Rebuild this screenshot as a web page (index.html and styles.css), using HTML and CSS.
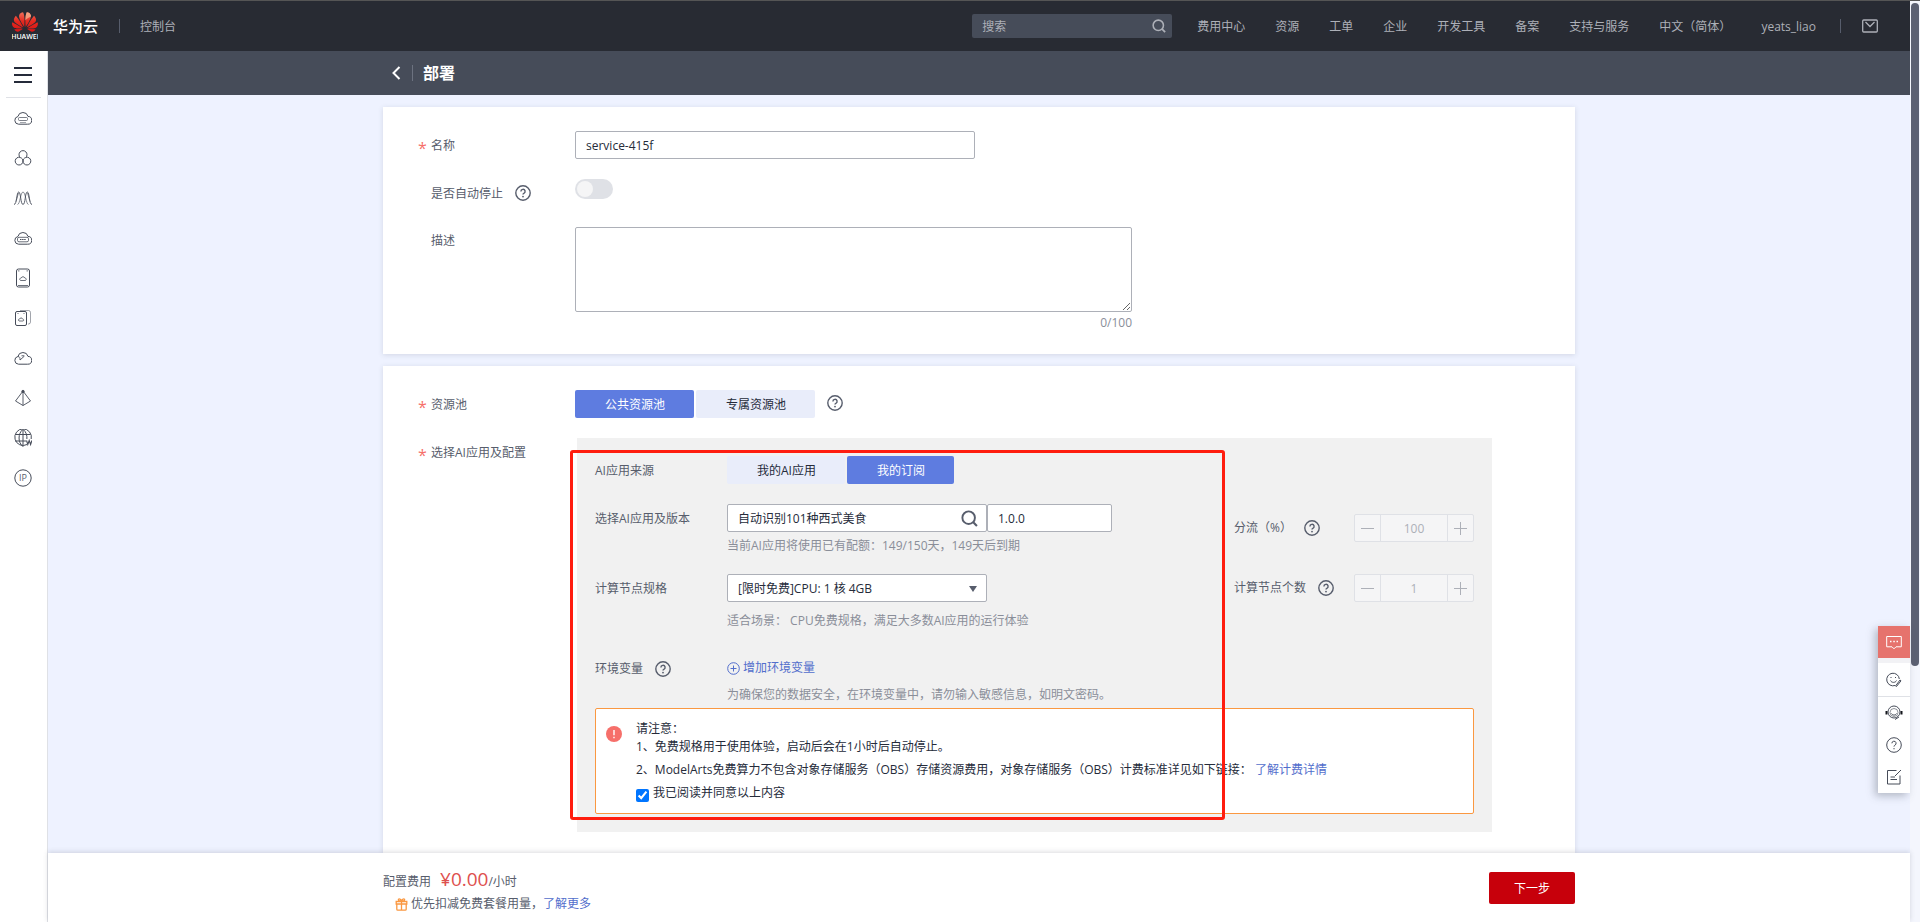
FILE: index.html
```html
<!DOCTYPE html>
<html lang="zh-CN">
<head>
<meta charset="utf-8">
<title>部署 - 华为云</title>
<link rel="stylesheet" href="styles.css">
</head>
<body>
<svg class="sprite" aria-hidden="true">
  <symbol id="help" viewBox="0 0 16 16"><circle cx="8" cy="8" r="7.2" fill="none" stroke="currentColor" stroke-width="1.4"/><path d="M5.9 6.4a2.1 2.1 0 1 1 3 1.9c-.6.3-.9.6-.9 1.3" fill="none" stroke="currentColor" stroke-width="1.4"/><circle cx="8" cy="11.6" r=".9" fill="currentColor"/></symbol>
  <symbol id="search" viewBox="0 0 16 16"><circle cx="7.2" cy="7.2" r="5.9" fill="none" stroke="currentColor" stroke-width="1.8"/><path d="M11.3 11.3 15 15" stroke="currentColor" stroke-width="2"/></symbol>
  <symbol id="cloud" viewBox="0 0 18 14"><path d="M4.500 13.200a3.900 3.900 0 0 1-.6-7.700A5.200 5.200 0 0 1 14 5.400 3.900 3.900 0 0 1 13.600 13.200Z" fill="none" stroke="currentColor"/></symbol>
</svg>
<div class="app">
  <div class="window">
    <header class="topbar">
      <a class="brand" href="#">
        <svg class="logo" width="26" height="28" viewBox="0 0 26 28" aria-hidden="true">
          <defs><linearGradient id="petal" x1="0" y1="0" x2="0" y2="1"><stop offset="0" stop-color="#f0705a"/><stop offset=".45" stop-color="#e62a20"/><stop offset="1" stop-color="#d81515"/></linearGradient></defs>
          <g transform="translate(0 -3) scale(1.08)"><path fill="url(#petal)" d="M3.67 6.14S1.82 7.91 1.72 9.78v.35c.08 1.51 1.22 2.4 1.22 2.4 1.83 1.79 6.26 4.04 7.3 4.55 0 0 .06.03.1-.01l.02-.04v-.04C7.52 10.8 3.67 6.14 3.67 6.14zM9.65 18.6c-.02-.08-.1-.08-.1-.08l-7.38.26c.8 1.43 2.15 2.53 3.56 2.2.96-.25 3.16-1.78 3.88-2.3.06-.05.04-.09.04-.09zm.08-.78C6.49 15.63.21 12.28.21 12.28c-.15.46-.2.9-.21 1.3v.07c0 1.07.4 1.82.4 1.82.8 1.69 2.34 2.2 2.34 2.2.7.3 1.4.31 1.4.31.12.02 4.4 0 5.54 0 .05 0 .08-.05.08-.05v-.06c0-.03-.03-.05-.03-.05zM9.06 3.19a3.42 3.42 0 00-2.57 3.15v.41c.03.6.16 1.05.16 1.05.66 2.9 3.86 7.65 4.55 8.65.05.05.1.03.1.03a.1.1 0 00.06-.1c1.06-10.6-1.11-13.42-1.11-13.42-.32.02-1.19.23-1.19.23z"/><path fill="url(#petal)" d="M17.359 5.46s-.49-1.8-2.44-2.28c0 0-.57-.14-1.17-.22 0 0-2.18 2.81-1.12 13.43.01.07.06.08.06.08.07.03.1-.03.1-.03.72-1.03 3.9-5.76 4.55-8.64 0 0 .36-1.4.02-2.34zm-2.92 13.07s-.07 0-.09.05c0 0-.01.07.03.1.7.51 2.85 2 3.88 2.3 0 0 .16.05.43.06h.14c.69-.02 1.9-.37 3-2.26l-7.4-.25zm7.83-8.41c.14-2.06-1.94-3.97-1.94-3.98 0 0-3.85 4.66-6.67 10.8 0 0-.03.08.02.13l.04.01h.06c1.06-.53 5.46-2.77 7.28-4.54 0 0 1.15-.93 1.21-2.42zm1.52 2.14s-6.28 3.37-9.52 5.55c0 0-.05.04-.03.11 0 0 .03.06.07.06 1.16 0 5.56 0 5.67-.02 0 0 .57-.02 1.27-.29 0 0 1.56-.5 2.37-2.27 0 0 .73-1.45.17-3.14z"/><path d="M17.359 5.46s-.49-1.8-2.44-2.28c0 0-.57-.14-1.17-.22 0 0-1.3 1.800-1.350 7.500 1.500-1.500 3.500-2.500 5.200-3.400 0 0 .2-.9-.24-1.600z" fill="#f6b48e" opacity=".75"/></g>
          <text x="13" y="27" text-anchor="middle" class="logo-text">HUAWEI</text>
        </svg>
        <span class="brand-name">华为云</span>
      </a>
      <span class="bar-divider"></span>
      <a class="console" href="#">控制台</a>
      <label class="top-search">
        <input type="text" placeholder="搜索" aria-label="搜索">
        <svg width="14" height="14"><use href="#search"/></svg>
      </label>
      <nav class="top-nav">
        <a href="#">费用中心</a><a href="#">资源</a><a href="#">工单</a><a href="#">企业</a><a href="#">开发工具</a><a href="#">备案</a><a href="#">支持与服务</a><a href="#">中文（简体）</a><a href="#">yeats_liao</a>
      </nav>
      <span class="bar-divider user-divider"></span>
      <button class="mail" aria-label="消息"><svg width="16" height="14" viewBox="0 0 16 14" fill="none" stroke="currentColor" stroke-width="1.3"><rect x=".7" y="1" width="14.600" height="12" rx="1"/><path d="M3.500 3 8 7.500 12.500 3"/></svg></button>
    </header>
    <div class="body">
      <aside class="sidebar">
        <button class="menu" aria-label="菜单"><span></span><span></span><span></span></button>
        <nav class="side-nav">
          <a href="#" aria-label="弹性云服务器"><svg width="18" height="14" viewBox="0 0 18 14" fill="none" stroke="currentColor"><use href="#cloud" width="18" height="14"/><rect x="4.500" y="6.500" width="9" height="3" rx="1" opacity=".7"/><path d="M6 11.500h6" opacity=".5"/></svg></a>
          <a href="#" aria-label="容器"><svg width="18" height="18" viewBox="0 0 18 18" fill="none" stroke="currentColor"><path d="M6.300 8.600a4 4 0 1 1 5.400 0M9 12a3.900 3.900 0 1 1-3-3.700M9 12a3.900 3.900 0 1 0 3-3.700M9 12c0-1.500-1-3-2.700-3.400M9 12c0-1.500 1-3 2.700-3.400"/></svg></a>
          <a href="#" aria-label="弹性伸缩"><svg width="18" height="18" viewBox="0 0 18 18" fill="none" stroke="currentColor" stroke-width=".9"><path d="M0 15.500C3 15.500 2.500 3 4.700 3S6.500 15.500 9 15.500 11 3 13.300 3 15 15.500 18 15.500"/><path d="M3.500 15.500C6 15.500 6.500 3 9 3s3 12.500 5.500 12.500M2 12.500 4.500 4M16 12.500 13.500 4" opacity=".7"/></svg></a>
          <a href="#" aria-label="云硬盘"><svg width="18" height="14" viewBox="0 0 18 14" fill="none" stroke="currentColor"><use href="#cloud" width="18" height="14"/><rect x="3.500" y="6.300" width="11" height="4.500" rx="1.500" opacity=".8"/><path d="M6 8.500h6" stroke-dasharray="1.500 .6"/></svg></a>
          <a href="#" aria-label="专属主机"><svg width="18" height="20" viewBox="0 0 18 20" fill="none" stroke="currentColor"><rect x="2.500" y="1" width="13" height="18" rx="2"/><path d="M4 17.500h10M4 2.900h1.500M12.500 2.900H14M6.500 12.500c-1.500-1-.5-2.700.7-2.500.6-1.700 3-1.700 3.600 0 1.400-.1 2 1.700.7 2.500Z" stroke-width=".8"/></svg></a>
          <a href="#" aria-label="镜像"><svg width="18" height="18" viewBox="0 0 18 18" fill="none" stroke="currentColor"><rect x="1.500" y="2.500" width="11" height="14" rx="1.500"/><path d="M6 1.500h8.500a2 2 0 0 1 2 2V13a2 2 0 0 1-2 2H14" opacity=".5"/><path d="M5 12c-1.200-.8-.4-2.200.6-2 .5-1.400 2.500-1.400 3 0 1 0 1.500 1.300.6 2ZM3.500 4.500h1M9.500 4.500h1" stroke-width=".8"/></svg></a>
          <a href="#" aria-label="云速建站"><svg width="18" height="14" viewBox="0 0 18 14" fill="none" stroke="currentColor"><use href="#cloud" width="18" height="14"/><path d="M4 5.500c2 .2 2 1.500 2 3.500l4.500-4M10 4.800H7.500" stroke-width=".9"/></svg></a>
          <a href="#" aria-label="安全"><svg width="18" height="18" viewBox="0 0 18 18" fill="none" stroke="currentColor" stroke-width=".9"><path d="M9 2 1.500 12 9 16.500 16.500 12ZM9 2v14.500"/><circle cx="9" cy="2.500" r="1.200" fill="currentColor"/></svg></a>
          <a href="#" aria-label="域名"><svg width="18" height="18" viewBox="1 1 18 18" fill="none" stroke="currentColor"><path d="M14 16.500A8.300 8.300 0 1 1 18.200 11M9.800 1.500c-5 4-5 13 0 17M10.200 1.500c3 2.400 4 6 3.700 9.500M2.500 6.500h15M2 13h11M10 1.500v17"/><path d="m13.500 12.500 1.300 4 1.400-4 1.400 4 1.300-4" stroke-width="1.100"/></svg></a>
          <a href="#" aria-label="弹性公网IP"><svg width="18" height="18" viewBox="0 0 18 18" fill="none" stroke="currentColor"><circle cx="9" cy="9" r="8.200"/><text x="9" y="12" text-anchor="middle" class="ip-text">IP</text></svg></a>
        </nav>
      </aside>
      <div class="page">
        <div class="subheader">
          <div class="subheader-inner">
            <button class="back" aria-label="返回"><svg width="10" height="14" viewBox="0 0 10 14" fill="none" stroke="currentColor" stroke-width="2"><path d="M8.500 1 2.500 7l6 6"/></svg></button>
            <h1>部署</h1>
          </div>
        </div>
        <main class="content">
          <section class="card">
            <div class="row">
              <label class="label required" for="name">名称</label>
              <input class="field name-field" id="name" type="text" value="service-415f">
            </div>
            <div class="row">
              <div class="label"><label for="autostop">是否自动停止</label><svg class="help" width="16" height="16"><use href="#help"/></svg></div>
              <input class="switch" id="autostop" type="checkbox" role="switch">
            </div>
            <div class="row">
              <label class="label" for="desc">描述</label>
              <div class="desc"><textarea id="desc"></textarea><span class="count">0/100</span></div>
            </div>
          </section>
          <section class="card pool-card">
            <div class="row">
              <span class="label required">资源池</span>
              <div class="segment"><button class="active">公共资源池</button><button>专属资源池</button></div>
              <svg class="help pool-help" width="16" height="16"><use href="#help"/></svg>
            </div>
            <div class="row">
              <span class="label required">选择AI应用及配置</span>
              <div class="panel">
                <div class="panel-grid">
                  <div class="panel-left">
                    <div class="prow source"><span class="plabel">AI应用来源</span><div class="segment"><button>我的AI应用</button><button class="active">我的订阅</button></div></div>
                    <div class="prow version">
                      <label class="plabel" for="app">选择AI应用及版本</label>
                      <div>
                        <div class="version-fields">
                          <div class="search-field"><input class="field" id="app" type="text" value="自动识别101种西式美食"><svg width="17" height="17"><use href="#search"/></svg></div>
                          <input class="field ver" type="text" value="1.0.0" aria-label="版本">
                        </div>
                        <p class="hint">当前AI应用将使用已有配额：149/150天，149天后到期</p>
                      </div>
                    </div>
                    <div class="prow spec">
                      <label class="plabel" for="spec">计算节点规格</label>
                      <div>
                        <div class="select"><select class="field" id="spec"><option>[限时免费]CPU: 1 核 4GB</option></select></div>
                        <p class="hint spec-hint">适合场景： CPU免费规格，满足大多数AI应用的运行体验</p>
                      </div>
                    </div>
                    <div class="prow">
                      <span class="plabel">环境变量<svg class="help" width="16" height="16"><use href="#help"/></svg></span>
                      <div>
                        <a class="link add" href="#"><svg width="13" height="13" viewBox="0 0 13 13" fill="none" stroke="currentColor"><circle cx="6.500" cy="6.500" r="5.800"/><path d="M3.500 6.500h6M6.500 3.500v6"/></svg>增加环境变量</a>
                        <p class="hint env-hint">为确保您的数据安全，在环境变量中，请勿输入敏感信息，如明文密码。</p>
                      </div>
                    </div>
                  </div>
                  <div class="panel-right">
                    <div class="steprow"><label for="flow">分流（%）</label><svg class="help" width="16" height="16"><use href="#help"/></svg><div class="stepper"><button disabled aria-label="减少"><i></i></button><input id="flow" type="text" value="100" disabled><button class="plus" disabled aria-label="增加"><i></i></button></div></div>
                    <div class="steprow"><label for="nodes">计算节点个数</label><svg class="help" width="16" height="16"><use href="#help"/></svg><div class="stepper"><button disabled aria-label="减少"><i></i></button><input id="nodes" type="text" value="1" disabled><button class="plus" disabled aria-label="增加"><i></i></button></div></div>
                  </div>
                </div>
                <div class="notice">
                  <svg class="notice-icon" width="16" height="16" viewBox="0 0 16 16"><circle cx="8" cy="8" r="8" fill="#f66f6a"/><path d="M8 4v5.200M8 10.700v1.500" stroke="#fff" stroke-width="1.400"/></svg>
                  <div class="notice-body">
                    <p class="notice-title">请注意：</p>
                    <p class="notice-first">1、免费规格用于使用体验，启动后会在1小时后自动停止。</p>
                    <p class="notice-line">2、ModelArts免费算力不包含对象存储服务（OBS）存储资源费用，对象存储服务（OBS）计费标准详见如下链接： <a class="link" href="#">了解计费详情</a></p>
                    <label class="agree"><input type="checkbox" checked><span>我已阅读并同意以上内容</span></label>
                  </div>
                </div>
                <div class="highlight"></div>
              </div>
            </div>
          </section>
        </main>
        <footer class="footer">
          <div class="footer-inner">
            <div class="cost">
              <p class="cost-line"><span>配置费用</span><strong>¥0.00</strong><span>/小时</span></p>
              <p class="gift"><svg width="13" height="13" viewBox="0 0 13 13" fill="none" stroke="#fa9841" stroke-width="1.300"><path d="M1.200 3.500h10.600v2.500H1.200ZM1.800 6v5.200a1 1 0 0 0 1 1h7.400a1 1 0 0 0 1-1V6M6.500 3.500v8.700M6.500 3.300C5 3.300 3 2.500 3.500 1.200c1-1 2.800.6 3 2.100.2-1.500 2-3.100 3-2.100.5 1.300-1.500 2.100-3 2.100"/></svg>优先扣减免费套餐用量，<a class="link" href="#">了解更多</a></p>
            </div>
            <button class="next">下一步</button>
          </div>
        </footer>
      </div>
    </div>
    <div class="float">
      <button class="float-chat" aria-label="反馈"><svg width="16" height="15" viewBox="0 0 16 15" fill="none" stroke="currentColor"><path d="M.7 1.500h14.600v10.300H10l-2 2-2-2H.7Z"/><path d="M4 6.500h1.500M7.300 6.500h1.500M10.500 6.500H12" stroke-width="1.500"/></svg></button>
      <div class="float-list">
        <button class="float-face" aria-label="评价"><svg width="16" height="16" viewBox="0 0 16 16" fill="none" stroke="currentColor"><path d="M9 13.500A6.300 6.300 0 1 1 13.300 7M4.500 8.500c1 2.500 5 2.500 6 0M9.500 14l4.500-6 1 .8-4.500 5.700ZM5 5v1M9.500 5v1"/></svg></button>
        <button aria-label="客服"><svg width="18" height="16" viewBox="0 0 18 16" fill="none" stroke="currentColor"><circle cx="9" cy="7" r="6"/><circle cx="9" cy="7.500" r="4" opacity=".6"/><path d="M6.500 8.500c1 2 4 2 5 0M14 12l-4 2.500"/><path d="M1.500 6v3.500M16.500 6v3.500" stroke="#14161c" stroke-width="2"/></svg></button>
        <button aria-label="帮助"><svg width="16" height="16" viewBox="0 0 16 16" fill="none" stroke="currentColor"><circle cx="8" cy="8" r="7.300"/><path d="M5.900 6.300a2.100 2.100 0 1 1 3 1.900c-.6.300-.9.700-.9 1.400M8 11v1.300"/></svg></button>
        <button aria-label="建议"><svg width="16" height="16" viewBox="0 0 16 16" fill="none" stroke="currentColor"><path d="M10.500 1.500H1.500v13.500h12.500V6.500M15 1 9 7M4.500 8h4.500M4.500 10.500H11"/></svg></button>
      </div>
    </div>
  </div>
  <div class="scrollbar"><div class="thumb"></div></div>
</div>
</body>
</html>
```
FILE: styles.css
```css
* { box-sizing: border-box; }
body, p, h1 { margin: 0; }
body, button, input, select, textarea {
  font-family: "Open Sans", "Noto Sans CJK SC", sans-serif;
  font-size: 12px;
}
body { color: #575d6c; line-height: 18px; }
a { color: inherit; text-decoration: none; }
button { border: 0; padding: 0; background: none; color: inherit; }
svg { flex: none; display: block; }
.sprite { position: absolute; width: 0; height: 0; }

.app { display: flex; height: 100vh; overflow: hidden; border-top: 1px solid #555; }
.window { position: relative; flex: 1; min-width: 0; display: flex; flex-direction: column; }
.scrollbar { width: 10px; padding: 2px 1px; background: #f4f6fd; }
.thumb { height: 663px; border-radius: 4px; background: #5c6173; }

.topbar { display: flex; align-items: center; flex: none; height: 50px; padding: 0 32px 0 12px; background: #282b33; color: #adb0b8; }
.brand { display: flex; align-items: center; gap: 15px; }
.logo-text { font: 600 7px "Open Sans", sans-serif; fill: #fff; }
.brand-name { color: #fff; font-size: 15px; font-weight: 500; }
.bar-divider { width: 1px; height: 14px; margin: 0 20px 0 21px; background: #575d6c; }
.console, .top-nav { line-height: 20px; padding-top: 2px; }
.top-search { display: flex; align-items: center; width: 200px; height: 24px; margin: 0 25px 0 auto; padding: 0 6px 0 10px; border-radius: 2px; background: #464c59; }
.top-search input { flex: 1; min-width: 0; border: 0; padding: 0; background: none; color: #adb0b8; }
.top-search input::placeholder { color: #adb0b8; }
.top-nav { display: flex; gap: 30px; white-space: nowrap; }
.user-divider { margin: 0 21px 0 24px; }

.body { display: flex; flex: 1; min-height: 0; }
.sidebar { flex: none; width: 48px; background: #fff; border-right: 1px solid #dfe1e6; color: #464c59; }
.menu { display: flex; flex-direction: column; gap: 5px; width: 35px; height: 47px; margin: 0 6px; padding: 16px 9px 0 8px; border-bottom: 1px solid #dfe1e6; }
.menu span { width: 18px; height: 2px; background: #252b3a; }
.side-nav a { display: flex; align-items: center; justify-content: flex-start; height: 40px; padding-left: 14px; }
.ip-text { font: 400 9px "Open Sans", sans-serif; fill: #575d6c; stroke: none; }

.page { flex: 1; min-width: 0; display: flex; flex-direction: column; background: #eef2ff; }
.subheader { flex: none; background: #464c59; color: #fff; }
.subheader-inner, .content, .footer-inner { width: 100%; max-width: 1192px; margin: 0 auto; }
.subheader-inner { display: flex; align-items: center; height: 44px; padding-left: 8px; }
.back { padding-right: 11px; }
h1 { padding-left: 10px; border-left: 1px solid #6c7280; font-size: 16px; line-height: 16px; font-weight: 700; }
.content { flex: 1; min-height: 0; display: flex; flex-direction: column; gap: 12px; padding-top: 12px; }
.card { flex: none; display: flex; flex-direction: column; gap: 20px; padding: 24px 83px 20px 35px; background: #fff; box-shadow: 0 1px 5px rgba(70, 76, 89, .16); }
.pool-card { flex: 1; min-height: 0; }

.row { display: flex; align-items: flex-start; }
.label { flex: none; display: flex; align-items: center; width: 157px; height: 28px; padding-left: 13px; line-height: 30px; }
.label label { padding-top: 2px; line-height: 28px; }
.required { padding: 1px 0 0; }
.required::before { content: "*"; width: 13px; height: 16px; color: #f66f6a; font-size: 16px; line-height: 20px; }
.help { margin-left: 12px; color: #575d6c; }
.field { display: block; width: 100%; height: 28px; border: 1px solid #adb0b8; border-radius: 2px; padding: 0 10px; background: #fff; color: #252b3a; }
.name-field { width: 400px; }
.switch { appearance: none; width: 38px; height: 20px; margin: 0; padding: 2px; border-radius: 10px; background: #dfe1e6; }
.switch::before { content: ""; display: block; width: 16px; height: 16px; border-radius: 8px; background: #f5f5f6; }
.desc { width: 557px; }
textarea { display: block; width: 100%; height: 85px; padding: 5px 10px; border: 1px solid #adb0b8; border-radius: 2px; resize: vertical; }
.count { display: block; color: #8a8e99; line-height: 22px; text-align: right; }

.segment { display: flex; gap: 2px; }
.segment button { height: 28px; padding: 0 29px 0 30px; background: #e9edfa; color: #252b3a; border-radius: 2px; white-space: nowrap; }
.segment .active { background: #5e7ce0; color: #fff; }
.pool-help { margin-top: 5px; }

.panel { position: relative; flex: 1; min-width: 0; margin-left: 2px; padding: 18px; background: #f1f1f1; }
.panel-grid { display: flex; justify-content: space-between; }
.panel-right { flex: none; display: flex; flex-direction: column; gap: 32px; width: 240px; padding-top: 58px; }
.prow { display: flex; align-items: flex-start; }
.source { margin-bottom: 20px; }
.version { margin-bottom: 14px; }
.spec { margin-bottom: 14px; }
.plabel { flex: none; display: flex; align-items: center; width: 132px; height: 28px; padding-top: 1px; line-height: 28px; }
.version-fields { display: flex; }
.search-field, .select { position: relative; width: 260px; }
.search-field svg { position: absolute; right: 9px; top: 6px; color: #575d6c; }
.ver { width: 125px; }
.select select { appearance: none; }
.select::after { content: ""; position: absolute; right: 10px; top: 12px; border: 4px solid transparent; border-top: 6px solid #575d6c; border-bottom: 0; }
.hint { color: #8a8e99; line-height: 28px; white-space: nowrap; }
.spec .spec-hint { line-height: 38px; }
.env-hint { line-height: 26px; }
.link { color: #526ecc; }
.add { display: flex; align-items: center; gap: 3px; line-height: 28px; }

.steprow { display: flex; align-items: center; }
.steprow .help { margin-left: 12px; }
.stepper { display: flex; width: 120px; height: 28px; margin-left: auto; border: 1px solid #dfe1e6; border-radius: 2px; background: #f5f5f6; }
.stepper input { flex: 1; min-width: 0; border: 1px solid #dfe1e6; border-width: 0 1px; padding: 0; background: none; color: #adb0b8; text-align: center; }
.stepper button { display: flex; align-items: center; justify-content: center; width: 25px; }
.stepper i { width: 13px; height: 1px; background: #adb0b8; }
.stepper .plus i { height: 13px; background: linear-gradient(#adb0b8, #adb0b8) center / 13px 1px no-repeat, linear-gradient(#adb0b8, #adb0b8) center / 1px 13px no-repeat; }

.notice { display: flex; gap: 14px; padding: 11px 10px; border: 1px solid #fa9841; border-radius: 2px; background: #fff; color: #252b3a; }
.notice-icon { margin-top: 6px; }
.notice-title { line-height: 18px; }
.notice-first { line-height: 18px; }
.notice-line { line-height: 28px; }
.agree { display: flex; align-items: flex-start; gap: 4px; line-height: 18px; }
.agree input { width: 13px; height: 13px; margin: 5px 0 0; accent-color: #0075ff; }
.highlight { position: absolute; left: -7px; top: 12px; width: 655px; height: 370px; border: 3px solid #ff1d0f; border-radius: 3px; pointer-events: none; }

.footer { position: relative; flex: none; background: #fff; box-shadow: 0 -1px 5px rgba(70, 76, 89, .2); }
.footer-inner { display: flex; align-items: flex-start; justify-content: space-between; height: 69px; padding-top: 14px; }
.cost-line { display: flex; align-items: baseline; line-height: 24px; }
.cost-line strong { margin-left: 9px; color: #de504e; font-size: 19px; font-weight: 400; }
.gift { display: flex; align-items: center; padding-left: 12px; line-height: 20px; }
.gift svg { margin-right: 3px; }
.next { width: 86px; height: 32px; margin-top: 5px; border-radius: 2px; background: #c7000b; color: #fff; }

.float { position: absolute; right: 0; top: 625px; width: 32px; box-shadow: -3px 3px 8px rgba(70, 76, 89, .35); color: #464c59; }
.float button { display: flex; align-items: center; justify-content: center; width: 32px; height: 32px; }
.float .float-chat { background: #e6736d; color: #fff; }
.float-list { border-top: 5px solid #f2f2f5; background: #fff; }
.float .float-face { height: 34px; border-bottom: 1px solid #dfe1e6; }
```
